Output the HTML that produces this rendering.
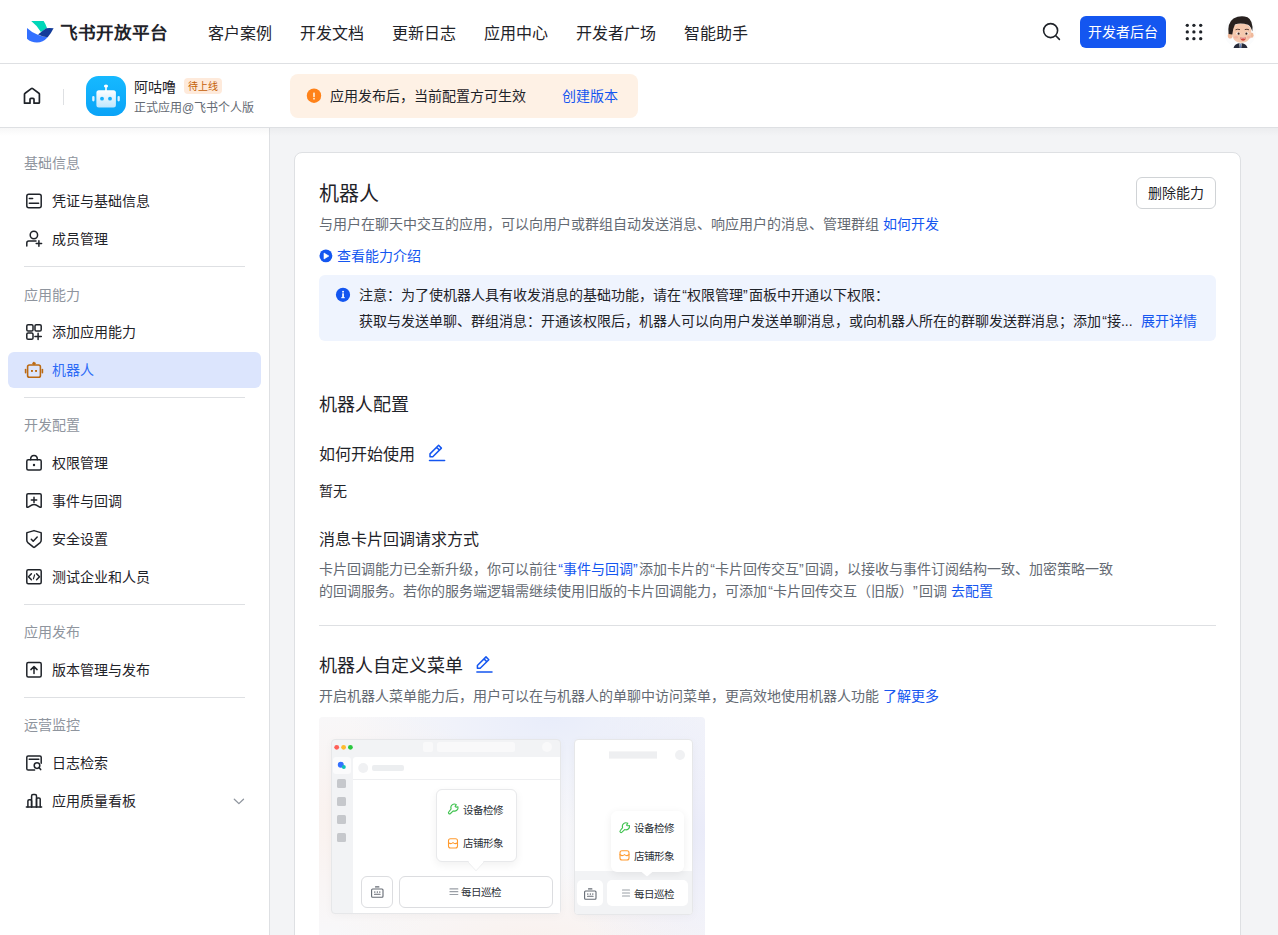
<!DOCTYPE html>
<html lang="zh-CN">
<head>
<meta charset="utf-8">
<style>
*{margin:0;padding:0;box-sizing:border-box}
html,body{width:1278px;height:935px;overflow:hidden;background:#fff}
body{text-spacing-trim:space-all;position:relative;font-family:"Liberation Sans",sans-serif;color:#1f2329;font-size:14px}
.a{position:absolute;white-space:nowrap}
.t14{font-size:14px;line-height:20px}
.t16{font-size:16px;line-height:22px}
.cap{color:#646a73}
.ph{color:#8f959e}
.lnk{color:#1456f0}
.ql{margin-left:1.3px}.qr{margin-right:1.3px}
svg{position:absolute;overflow:visible}
</style>
</head>
<body>
<!-- HEADER -->
<div class="a" style="left:0;top:0;width:1278px;height:64px;border-bottom:1px solid #dee0e3;background:#fff"></div>
<svg style="left:0;top:0" width="60" height="60" viewBox="0 0 60 60">
  <path d="M31.2 21 L43.6 21 Q46 24.5 47 27.9 Q44 29.8 40.9 31.9 Q36.5 25 31.2 21Z" fill="#00d6b9"/>
  <path d="M27 27.9 Q32.5 33 37.8 34.8 Q43 37 47.7 37.2 Q43 42.5 36.9 42.5 Q31 42.5 27 38.7Z" fill="#3370ff"/>
  <path d="M38.1 34.5 Q42 31 46.2 28.2 Q50 27.8 53.6 28.3 Q51 33.5 47.7 37.2 Q43 37 38.1 34.5Z" fill="#133c9a"/>
</svg>
<div class="a" style="left:59.5px;top:20.5px;font-size:17.6px;line-height:24px;font-weight:bold;color:#1f2329">飞书开放平台</div>
<div class="a t16" style="left:208px;top:23px">客户案例</div>
<div class="a t16" style="left:300px;top:23px">开发文档</div>
<div class="a t16" style="left:392px;top:23px">更新日志</div>
<div class="a t16" style="left:484px;top:23px">应用中心</div>
<div class="a t16" style="left:576px;top:23px">开发者广场</div>
<div class="a t16" style="left:684px;top:23px">智能助手</div>
<svg style="left:0;top:0" width="1" height="1">
  <circle cx="1050.6" cy="30.6" r="7" fill="none" stroke="#1f2329" stroke-width="1.6"/>
  <line x1="1055.8" y1="35.8" x2="1059.4" y2="39.4" stroke="#1f2329" stroke-width="1.6" stroke-linecap="round"/>
</svg>
<div class="a" style="left:1080px;top:16px;width:86px;height:32px;border-radius:6px;background:#1456f0;color:#fff;font-size:14px;line-height:32px;text-align:center">开发者后台</div>
<svg style="left:0;top:0" width="1" height="1" fill="#1f2329">
  <circle cx="1187.3" cy="25.3" r="1.65"/><circle cx="1193.9" cy="25.3" r="1.65"/><circle cx="1200.7" cy="25.3" r="1.65"/>
  <circle cx="1187.3" cy="31.9" r="1.65"/><circle cx="1193.9" cy="31.9" r="1.65"/><circle cx="1200.7" cy="31.9" r="1.65"/>
  <circle cx="1187.3" cy="38.7" r="1.65"/><circle cx="1193.9" cy="38.7" r="1.65"/><circle cx="1200.7" cy="38.7" r="1.65"/>
</svg>
<!-- avatar -->
<svg style="left:0;top:0" width="1" height="1">
  <circle cx="1240" cy="32" r="16" fill="#fbfcfd"/>
  <path d="M1233.5 48 Q1234.5 43.5 1240.5 43 Q1246.5 43.5 1247.5 48Z" fill="#262a3a"/>
  <path d="M1239.3 43.2 L1241.7 43.2 L1241.2 48 L1239.8 48Z" fill="#f4f6f8"/>
  <path d="M1240.2 44 L1240.8 44 L1240.9 48 L1240.1 48Z" fill="#2c4f9e"/>
  <ellipse cx="1230.2" cy="35.8" rx="2.4" ry="2.8" fill="#efb89a"/>
  <ellipse cx="1251.8" cy="35.2" rx="1.8" ry="2.6" fill="#efb89a"/>
  <path d="M1232 31 Q1231.5 42.5 1241.5 42.8 Q1251 42.5 1251.2 31 Q1250.5 23.5 1241.5 23.5 Q1232.5 23.5 1232 31Z" fill="#f5c9ae"/>
  <path d="M1228.6 34 Q1227.2 23 1233.5 18.6 Q1240 15 1247.5 17.2 Q1253.5 20.5 1252.3 31.5 Q1251 26.5 1248 24.8 Q1241 22.5 1235 24.4 Q1233 28 1232.3 34.5Z" fill="#28211f"/>
  <path d="M1235.5 29.8 Q1237.5 28.8 1240 29.6 M1244.8 29.6 Q1247 28.8 1249 29.8" stroke="#4a3028" stroke-width="0.9" fill="none"/>
  <ellipse cx="1238.3" cy="33.6" rx="1.9" ry="1.3" fill="#fff"/>
  <ellipse cx="1246.7" cy="33.6" rx="1.8" ry="1.3" fill="#fff"/>
  <circle cx="1238.6" cy="33.7" r="1.1" fill="#3a1c14"/>
  <circle cx="1246.4" cy="33.7" r="1.1" fill="#3a1c14"/>
  <ellipse cx="1236" cy="37.2" rx="2" ry="1.2" fill="#f3a99a" opacity="0.6"/>
  <ellipse cx="1249" cy="37.2" rx="2" ry="1.2" fill="#f3a99a" opacity="0.6"/>
  <path d="M1240.2 37.6 Q1243 37.1 1246 37.6 Q1245.5 40.8 1243.1 40.8 Q1240.7 40.8 1240.2 37.6Z" fill="#d2473f"/>
  <path d="M1240.6 37.7 Q1243 37.3 1245.6 37.7 L1245.4 38.4 Q1243 38.1 1240.8 38.4Z" fill="#fff"/>
</svg>

<!-- SUB BAR -->
<div class="a" style="left:0;top:64px;width:1278px;height:64px;border-bottom:1px solid #dee0e3;background:#fff"></div>
<svg style="left:0;top:0" width="1" height="1">
  <path d="M24.5 103.2 L24.5 94.3 Q24.5 93.6 25.1 93.2 L31.3 88.6 Q32 88.1 32.7 88.6 L38.9 93.2 Q39.4 93.6 39.4 94.3 L39.4 102.4 Q39.4 103.2 38.6 103.2 L34 103.2 L34 99.3 Q34 98.3 33 98.3 L31 98.3 Q30 98.3 30 99.3 L30 103.2 L25.3 103.2 Q24.5 103.2 24.5 102.4Z" fill="none" stroke="#1f2329" stroke-width="1.7" stroke-linejoin="round"/>
</svg>
<div class="a" style="left:63px;top:89px;width:1px;height:16px;background:#dee0e3"></div>
<svg style="left:0;top:0" width="1" height="1">
  <defs>
    <linearGradient id="gi" x1="0" y1="0" x2="0" y2="1"><stop offset="0" stop-color="#16b9ff"/><stop offset="1" stop-color="#0aa3f7"/></linearGradient>
    <linearGradient id="gh" x1="0" y1="0" x2="0" y2="1"><stop offset="0" stop-color="#ffffff"/><stop offset="1" stop-color="#bfe6fd"/></linearGradient>
  </defs>
  <rect x="86" y="76" width="40" height="40" rx="12.5" fill="url(#gi)"/>
  <rect x="96.4" y="90.2" width="19.5" height="17.2" rx="2.5" fill="url(#gh)"/>
  <rect x="105.2" y="87" width="1.6" height="4" fill="#fff"/>
  <ellipse cx="106" cy="86" rx="2.1" ry="1.6" fill="#fff"/>
  <circle cx="102" cy="98.7" r="1.9" fill="#16b0fc"/>
  <circle cx="110" cy="98.7" r="1.9" fill="#16b0fc"/>
  <rect x="92.2" y="95.9" width="2.3" height="5.6" rx="1.15" fill="#dff3ff"/>
  <rect x="117.5" y="95.9" width="2.3" height="5.6" rx="1.15" fill="#dff3ff"/>
</svg>
<div class="a t14" style="left:134px;top:76.5px">阿咕噜</div>
<div class="a" style="left:184px;top:78px;width:38px;height:16px;border-radius:4px;background:#feeadb;color:#c45e05;font-size:10px;line-height:17px;text-align:center">待上线</div>
<div class="a cap" style="left:134px;top:98px;font-size:12px;line-height:20px">正式应用@飞书个人版</div>
<div class="a" style="left:290px;top:74px;width:348px;height:44px;border-radius:8px;background:#fef1e5"></div>
<svg style="left:0;top:0" width="1" height="1">
  <circle cx="314" cy="95.7" r="7.2" fill="#ff8219"/>
  <rect x="313.1" y="92.5" width="1.8" height="4.4" rx="0.5" fill="#ffe6cc"/>
  <rect x="313.1" y="97.8" width="1.8" height="1.6" rx="0.5" fill="#ffe6cc"/>
</svg>
<div class="a t14" style="left:330px;top:86px">应用发布后，当前配置方可生效</div>
<div class="a t14 lnk" style="left:562px;top:86px">创建版本</div>

<!-- SIDEBAR -->
<div class="a" style="left:269px;top:128px;width:1px;height:807px;background:#dee0e3"></div>
<div class="a" style="left:270px;top:128px;width:1008px;height:807px;background:#f3f4f6"></div>
<div class="a" style="left:0;top:128px;width:1278px;height:8px;background:linear-gradient(rgba(31,35,41,0.035),rgba(31,35,41,0))"></div>

<div class="a t14 ph" style="left:24px;top:153px">基础信息</div>
<div class="a t14" style="left:52px;top:191px">凭证与基础信息</div>
<div class="a t14" style="left:52px;top:229px">成员管理</div>
<div class="a" style="left:24px;top:266px;width:221px;height:1px;background:#dee0e3"></div>
<div class="a t14 ph" style="left:24px;top:285px">应用能力</div>
<div class="a t14" style="left:52px;top:322px">添加应用能力</div>
<div class="a" style="left:8px;top:352px;width:253px;height:36px;border-radius:6px;background:#dce5fd"></div>
<div class="a t14" style="left:52px;top:360px;color:#2e6cf6">机器人</div>
<div class="a" style="left:24px;top:397px;width:221px;height:1px;background:#dee0e3"></div>
<div class="a t14 ph" style="left:24px;top:415px">开发配置</div>
<div class="a t14" style="left:52px;top:453px">权限管理</div>
<div class="a t14" style="left:52px;top:491px">事件与回调</div>
<div class="a t14" style="left:52px;top:529px">安全设置</div>
<div class="a t14" style="left:52px;top:567px">测试企业和人员</div>
<div class="a" style="left:24px;top:604px;width:221px;height:1px;background:#dee0e3"></div>
<div class="a t14 ph" style="left:24px;top:622px">应用发布</div>
<div class="a t14" style="left:52px;top:660px">版本管理与发布</div>
<div class="a" style="left:24px;top:697px;width:221px;height:1px;background:#dee0e3"></div>
<div class="a t14 ph" style="left:24px;top:715px">运营监控</div>
<div class="a t14" style="left:52px;top:753px">日志检索</div>
<div class="a t14" style="left:52px;top:791px">应用质量看板</div>
<svg style="left:0;top:0" width="1" height="1" fill="none" stroke="#1f2329" stroke-width="1.5" stroke-linecap="round" stroke-linejoin="round">
  <rect x="26.8" y="194.2" width="14.4" height="13.6" rx="2"/>
  <line x1="29.3" y1="198.5" x2="32.6" y2="198.5"/>
  <line x1="29.3" y1="203.2" x2="38.6" y2="203.2"/>
  <circle cx="33.9" cy="235" r="3.7"/>
  <path d="M26.8 246 L26.8 243 Q26.8 241 28.8 241 L36 241"/>
  <path d="M38.9 240.8 V246.2 M36.2 243.5 H41.6"/>
  <rect x="26.8" y="324.8" width="6.2" height="6.2" rx="1.3"/>
  <rect x="35" y="324.8" width="6.2" height="6.2" rx="1.3"/>
  <rect x="26.8" y="333" width="6.2" height="6.2" rx="1.3"/>
  <path d="M38.1 333.2 V339.6 M34.9 336.4 H41.3"/>
</svg>
<svg style="left:0;top:0" width="1" height="1" fill="none" stroke="#bb6912" stroke-width="1.6" stroke-linecap="round" stroke-linejoin="round">
  <rect x="27.6" y="365" width="12.8" height="12.2" rx="1.8"/>
  <rect x="32.6" y="362.4" width="2.8" height="2" rx="1" fill="#bb6912" stroke-width="0.8"/>
  <line x1="25.6" y1="369.5" x2="25.6" y2="372.8"/>
  <line x1="42.4" y1="369.5" x2="42.4" y2="372.8"/>
</svg>
<svg style="left:0;top:0" width="1" height="1" fill="#bb6912">
  <rect x="31" y="370" width="1.9" height="1.9"/>
  <rect x="35.1" y="370" width="1.9" height="1.9"/>
</svg>
<svg style="left:0;top:0" width="1" height="1" fill="none" stroke="#1f2329" stroke-width="1.5" stroke-linecap="round" stroke-linejoin="round">
  <rect x="26.8" y="459.7" width="14.4" height="10.3" rx="1.5"/>
  <path d="M30.6 459.7 Q30.6 455.6 34 455.6 Q37.4 455.6 37.4 459.7"/>
  <path d="M26.8 507 V495 Q26.8 493.7 28.1 493.7 H39.9 Q41.2 493.7 41.2 495 V507 Q40 507.6 38.5 506.4 Q36 504.6 34 504.6 Q32 504.6 29.5 506.4 Q28 507.6 26.8 507Z"/>
  <path d="M34 497.2 V502.6 M31.3 499.9 H36.7"/>
  <path d="M34 530.6 L40.8 532.6 Q41.2 532.7 41.2 533.2 V540 Q41.2 541.5 40.2 542.6 L34.6 547.2 Q34 547.6 33.4 547.2 L27.8 542.6 Q26.8 541.5 26.8 540 V533.2 Q26.8 532.7 27.2 532.6Z"/>
  <path d="M31.3 539.2 L33.2 541.2 L37.2 537"/>
  <rect x="26.8" y="569.8" width="14.4" height="13.9" rx="1.5"/>
  <path d="M31.4 573.7 L28.5 576.8 L31.4 579.8 M36.6 573.7 L39.5 576.8 L36.6 579.8"/>
  <path d="M34.6 574.8 L33.4 578.8" stroke-width="1.2"/>
  <rect x="26.8" y="662.6" width="14.4" height="14.3" rx="1.5"/>
  <path d="M34 673.4 V666.6 M30.9 669.6 L34 666.6 L37.1 669.6"/>
  <path d="M41.2 763.3 V757.3 Q41.2 755.9 39.8 755.9 H28.2 Q26.8 755.9 26.8 757.3 V768.7 Q26.8 770.1 28.2 770.1 H34.6"/>
  <line x1="29.2" y1="759.2" x2="38.8" y2="759.2"/>
  <circle cx="37" cy="765.6" r="2.8"/>
  <line x1="39.1" y1="767.7" x2="40.7" y2="769.6"/>
  <line x1="26.4" y1="806.9" x2="41.6" y2="806.9"/>
  <path d="M27.9 806.9 V801 Q27.9 799.8 29.1 799.8 H30.4 Q31.6 799.8 31.6 801 V806.9"/>
  <path d="M31.6 806.9 V796 Q31.6 794.6 33 794.6 H35 Q36.5 794.6 36.5 796 V806.9"/>
  <path d="M36.5 806.9 V799 Q36.5 797.9 37.7 797.9 H39 Q40.2 797.9 40.2 799 V806.9"/>
</svg>
<svg style="left:0;top:0" width="1" height="1" fill="#1f2329"><circle cx="34" cy="465" r="1.2"/></svg>
<svg style="left:0;top:0" width="1" height="1" fill="none" stroke="#8f959e" stroke-width="1.3" stroke-linecap="round" stroke-linejoin="round">
  <path d="M234.3 799.3 L238.9 803.6 L243.5 799.3"/>
</svg>

<!-- CARD -->
<div class="a" style="left:294px;top:152px;width:947px;height:800px;border:1px solid #dee0e3;border-radius:8px;background:#fff"></div>
<div class="a" style="left:319px;top:180px;font-size:20px;line-height:28px">机器人</div>
<div class="a" style="left:1136px;top:177px;width:80px;height:32px;border:1px solid #d0d3d6;border-radius:6px;font-size:14px;line-height:31px;text-align:center">删除能力</div>
<div class="a t14 cap" style="left:319px;top:214px">与用户在聊天中交互的应用，可以向用户或群组自动发送消息、响应用户的消息、管理群组 <span class="lnk">如何开发</span></div>
<svg style="left:0;top:0" width="1" height="1">
  <circle cx="325.9" cy="255.9" r="6.4" fill="#1456f0"/>
  <path d="M324 253 L328.9 256 L324 259Z" fill="#fff" stroke="#fff" stroke-width="0.6" stroke-linejoin="round"/>
</svg>
<div class="a t14 lnk" style="left:337px;top:246px">查看能力介绍</div>
<div class="a" style="left:319px;top:275px;width:897px;height:66px;border-radius:6px;background:#eff4fe"></div>
<svg style="left:0;top:0" width="1" height="1">
  <circle cx="343" cy="294.8" r="7.1" fill="#1456f0"/>
  <rect x="342.2" y="293.3" width="1.7" height="4.6" fill="#fff"/>
  <rect x="342.2" y="290.9" width="1.7" height="1.6" fill="#fff"/>
  <rect x="341.2" y="297.2" width="3.6" height="1" fill="#fff"/>
</svg>
<div class="a t14" style="left:359px;top:285px">注意：为了使机器人具有收发消息的基础功能，请在<span class="ql">“</span>权限管理<span class="qr">”</span>面板中开通以下权限：</div>
<div class="a t14" style="left:359px;top:311px">获取与发送单聊、群组消息：开通该权限后，机器人可以向用户发送单聊消息，或向机器人所在的群聊发送群消息；添加<span class="ql">“</span>接...</div>
<div class="a t14 lnk" style="left:1141px;top:311px">展开详情</div>

<div class="a" style="left:319px;top:391.5px;font-size:18px;line-height:26px">机器人配置</div>
<div class="a t16" style="left:319px;top:444px">如何开始使用</div>
<svg style="left:0;top:0" width="1" height="1" fill="none" stroke="#1456f0" stroke-width="1.5" stroke-linecap="round" stroke-linejoin="round">
  <path d="M430 456.7 L430 453.9 L438.6 445.3 L441.4 448.1 L432.8 456.7Z M436.6 447.3 L439.4 450.1"/>
  <line x1="429.5" y1="460.4" x2="444.6" y2="460.4"/>
</svg>
<div class="a t14" style="left:319px;top:480.5px">暂无</div>
<div class="a t16" style="left:319px;top:528.5px">消息卡片回调请求方式</div>
<div class="a t14 cap" style="left:319px;top:559px">卡片回调能力已全新升级，你可以前往<span class="lnk"><span class="ql">“</span>事件与回调<span class="qr">”</span></span>添加卡片的<span class="ql">“</span>卡片回传交互<span class="qr">”</span>回调，以接收与事件订阅结构一致、加密策略一致</div>
<div class="a t14 cap" style="left:319px;top:581px">的回调服务。若你的服务端逻辑需继续使用旧版的卡片回调能力，可添加<span class="ql">“</span>卡片回传交互（旧版）<span class="qr">”</span>回调 <span class="lnk">去配置</span></div>
<div class="a" style="left:319px;top:625px;width:897px;height:1px;background:#dee0e3"></div>
<div class="a" style="left:319px;top:653px;font-size:18px;line-height:26px">机器人自定义菜单</div>
<svg style="left:0;top:0" width="1" height="1" fill="none" stroke="#1456f0" stroke-width="1.5" stroke-linecap="round" stroke-linejoin="round">
  <path d="M477.4 668.3 L477.4 665.5 L486 656.9 L488.8 659.7 L480.2 668.3Z M484 658.9 L486.8 661.7"/>
  <line x1="476.9" y1="672" x2="492" y2="672"/>
</svg>
<div class="a t14 cap" style="left:319px;top:686px">开启机器人菜单能力后，用户可以在与机器人的单聊中访问菜单，更高效地使用机器人功能 <span class="lnk">了解更多</span></div>

<!-- ILLUSTRATION -->
<div class="a" style="left:319px;top:717px;width:386px;height:230px;border-radius:4px;background:
radial-gradient(ellipse 160px 120px at 8% 45%, rgba(252,236,228,0.55), rgba(252,236,228,0) 100%),
radial-gradient(ellipse 200px 110px at 60% 0%, rgba(226,232,250,0.7), rgba(226,232,250,0) 100%),
radial-gradient(ellipse 150px 160px at 100% 50%, rgba(228,230,248,0.7), rgba(228,230,248,0) 100%),
radial-gradient(ellipse 200px 80px at 55% 100%, rgba(250,238,232,0.7), rgba(250,238,232,0) 100%),
#f8f8fa"></div>
<!-- desktop window -->
<div class="a" style="left:331px;top:739px;width:230px;height:175px;border-radius:4px;background:#f2f3f5;border:1px solid #e6e7e9;box-shadow:0 2px 10px rgba(0,0,0,0.03)"></div>
<svg style="left:0;top:0" width="1" height="1">
  <circle cx="336.7" cy="747.3" r="2.4" fill="#fe5f57"/>
  <circle cx="343.6" cy="747.3" r="2.4" fill="#febb2e"/>
  <circle cx="350.4" cy="747.3" r="2.4" fill="#2ac73f"/>
  <rect x="423" y="742" width="10" height="10" rx="2" fill="#f9f9fa"/>
  <rect x="437" y="742" width="78" height="10" rx="2.5" fill="#f9f9fa"/>
  <circle cx="547" cy="747" r="5" fill="#f9f9fa"/>
  <rect x="333" y="757" width="18" height="17" rx="3" fill="#fbfbfc"/>
  <circle cx="340.8" cy="764.7" r="3" fill="#3370ff"/>
  <circle cx="343.8" cy="767" r="2" fill="#10c0b6"/>
  <rect x="337" y="779" width="9" height="9" rx="1.5" fill="#c6c8cc"/>
  <rect x="337" y="797" width="9" height="9" rx="1.5" fill="#c6c8cc"/>
  <rect x="337" y="815" width="9" height="9" rx="1.5" fill="#c6c8cc"/>
  <rect x="337" y="833" width="9" height="9" rx="1.5" fill="#c6c8cc"/>
</svg>
<div class="a" style="left:353px;top:757px;width:207px;height:156px;background:#fff;border-top-left-radius:3px"></div>
<svg style="left:0;top:0" width="1" height="1">
  <circle cx="363.2" cy="768" r="5" fill="#f0f1f3"/>
  <rect x="372" y="765" width="32" height="6" rx="2" fill="#eceef0"/>
  <rect x="353" y="779" width="207" height="1" fill="#eeeff1"/>
</svg>
<div class="a" style="left:436px;top:789px;width:81px;height:73px;border-radius:6px;background:#fff;border:1px solid #e8e9eb;box-shadow:0 3px 8px rgba(0,0,0,0.06)"></div>
<svg style="left:0;top:0" width="1" height="1">
  <path d="M468 861.5 L476 870.5 L484 861.5Z" fill="#fff"/>
  <path d="M468 862 L476 870.8 L484 862" fill="none" stroke="#ebecee" stroke-width="0.8"/>
  <rect x="469" y="860" width="14" height="2.5" fill="#fff"/>
</svg>
<div class="a" style="left:361px;top:876px;width:32px;height:32px;border-radius:6px;background:#fff;border:1px solid #dcdde0"></div>
<div class="a" style="left:399px;top:876px;width:154px;height:32px;border-radius:6px;background:#fff;border:1px solid #dcdde0"></div>
<!-- mobile window -->
<div class="a" style="left:574px;top:739px;width:119px;height:176px;border-radius:4px;background:#fff;border:1px solid #e6e7e9;box-shadow:0 2px 10px rgba(0,0,0,0.03);overflow:hidden">
  <div style="position:absolute;left:0;top:131px;width:119px;height:45px;background:#f2f3f5"></div>
</div>
<svg style="left:0;top:0" width="1" height="1">
  <rect x="609" y="751.4" width="48" height="7.2" fill="#eeeff1"/>
  <circle cx="680" cy="755" r="5" fill="#f0f1f3"/>
</svg>
<div class="a" style="left:611px;top:811px;width:73px;height:61px;border-radius:6px;background:#fff;box-shadow:0 2px 8px rgba(0,0,0,0.07)"></div>
<svg style="left:0;top:0" width="1" height="1">
  <path d="M641 871.5 L647 876.5 L653 871.5Z" fill="#fff"/>
</svg>
<div class="a" style="left:577px;top:880px;width:26px;height:26px;border-radius:5px;background:#fff"></div>
<div class="a" style="left:607px;top:880px;width:81px;height:26px;border-radius:5px;background:#fff"></div>
<!-- menu texts -->
<div class="a" style="left:463px;top:802px;font-size:10.5px;line-height:16px;color:#2b2f36">设备检修</div>
<div class="a" style="left:463px;top:835px;font-size:10.5px;line-height:16px;color:#2b2f36">店铺形象</div>
<div class="a" style="left:460.5px;top:884px;font-size:10.5px;line-height:16px;color:#2b2f36">每日巡检</div>
<div class="a" style="left:634px;top:820px;font-size:10.5px;line-height:16px;color:#2b2f36">设备检修</div>
<div class="a" style="left:634px;top:848px;font-size:10.5px;line-height:16px;color:#2b2f36">店铺形象</div>
<div class="a" style="left:634px;top:885.5px;font-size:10.5px;line-height:16px;color:#2b2f36">每日巡检</div>
<svg style="left:0;top:0" width="1" height="1" fill="none" stroke-linecap="round" stroke-linejoin="round">
  <g stroke="#9a9fa6" stroke-width="1.2">
    <path d="M450 888.9 H457.8 M450 891.7 H457.8 M450 894.5 H457.8"/>
    <path d="M622.5 890 H629.5 M622.5 893 H629.5 M622.5 896 H629.5"/>
  </g>
  <g stroke="#646a73" stroke-width="1.1">
    <rect x="371.6" y="889" width="11.4" height="8.2" rx="1"/>
    <path d="M375.5 886.9 H378.9 M374.5 894.3 H380.1" />
    <path d="M374.8 891.6 V892.6 M377.3 891.6 V892.6 M379.8 891.6 V892.6" stroke-width="0.9"/>
    <rect x="584.6" y="891" width="11.4" height="8.2" rx="1"/>
    <path d="M588.5 888.9 H591.9 M587.5 896.3 H593.1" />
    <path d="M587.8 893.6 V894.6 M590.3 893.6 V894.6 M592.8 893.6 V894.6" stroke-width="0.9"/>
  </g>
  <g stroke="#3ec24e" stroke-width="1.1">
    <path transform="translate(448.2,804)" d="M2.9 5.0 A3.6 3.6 0 0 1 8.1 0.6 L6.9 2.4 Q7.6 3.2 8.3 3.1 L9.8 2.8 A3.6 3.6 0 0 1 5.0 6.9 L2.3 9.5 Q1.4 10.3 0.6 9.5 Q-0.2 8.7 0.6 7.8 Z"/>
    <path transform="translate(619.7,822.7)" d="M2.9 5.0 A3.6 3.6 0 0 1 8.1 0.6 L6.9 2.4 Q7.6 3.2 8.3 3.1 L9.8 2.8 A3.6 3.6 0 0 1 5.0 6.9 L2.3 9.5 Q1.4 10.3 0.6 9.5 Q-0.2 8.7 0.6 7.8 Z"/>
  </g>
  <g stroke="#ff9a2e" stroke-width="1.1">
    <rect x="448.5" y="838.8" width="9" height="9.2" rx="2"/>
    <path d="M448.5 842.6 Q450.7 844.6 453 842.6 Q455.3 844.6 457.5 842.6"/>
    <rect x="620" y="850.8" width="9" height="9.2" rx="2"/>
    <path d="M620 854.6 Q622.2 856.6 624.5 854.6 Q626.8 856.6 629 854.6"/>
  </g>
</svg>
